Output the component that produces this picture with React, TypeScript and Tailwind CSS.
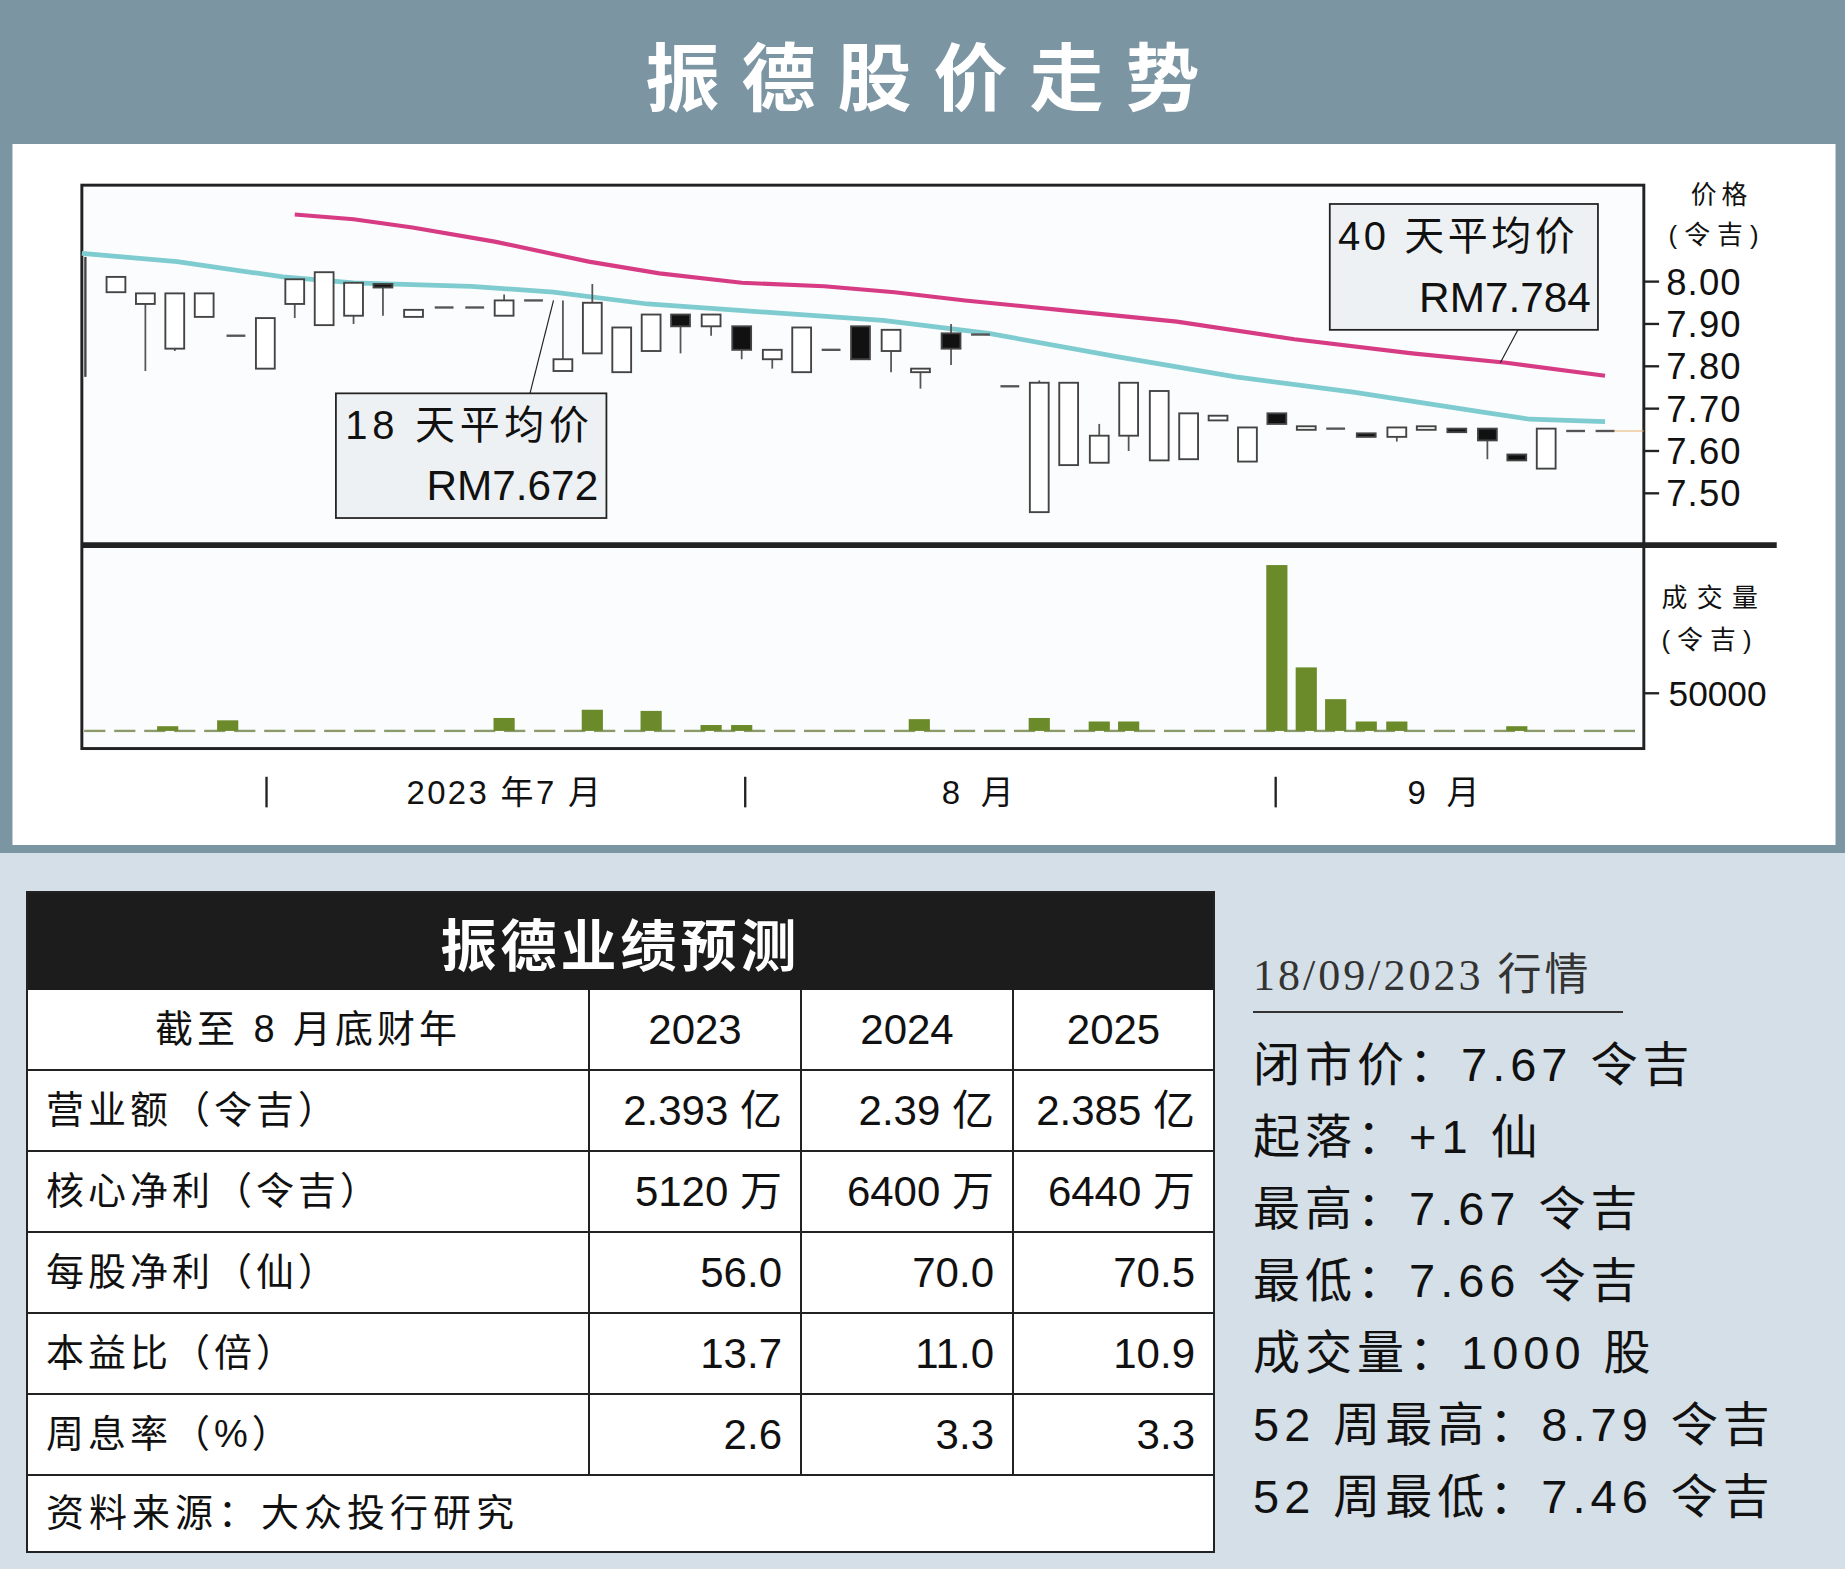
import React from "react";

type C = [number, number, number, number?, number?, number?];
const candles: C[] = [
  [98, 235, 248], [123, 249, 258, 249, 315], [148, 249, 296, 249, 298], [173, 249, 269],
  [200, 285, 286, 285, 302], [225, 270, 313], [250, 237, 258, 237, 270], [275, 231, 276],
  [300, 240, 268, 240, 275], [325, 241, 244, 241, 268, 1], [351, 263, 269], [377, 261, 262],
  [403, 261, 262], [428, 255, 268, 250, 268], [453, 255, 256], [478, 305, 315, 255, 315],
  [503, 257, 300, 241, 300], [528, 278, 316], [553, 267, 298], [578, 267, 277, 267, 300, 1],
  [604, 267, 277, 267, 285], [630, 277, 297, 277, 305, 1], [656, 297, 305, 297, 313],
  [681, 278, 316], [706, 297, 298], [731, 277, 305, 277, 305, 1], [757, 280, 298, 280, 316],
  [782, 313, 316, 313, 330], [808, 283, 296, 275, 310, 1], [833, 284, 285], [858, 328, 329],
  [883, 325, 435, 323, 435], [908, 325, 395], [934, 370, 393, 360, 393], [959, 325, 370, 325, 383],
  [985, 332, 391], [1010, 351, 390], [1035, 353, 357], [1060, 363, 392], [1085, 351, 360, 351, 360, 1],
  [1110, 362, 365], [1135, 364, 365], [1161, 368, 371, 368, 371, 1], [1187, 363, 371, 363, 375],
  [1212, 362, 365], [1238, 364, 367, 364, 367, 1], [1264, 364, 374, 364, 390, 1], [1289, 386, 391, 386, 391, 1],
  [1314, 364, 398], [1339, 366, 367], [1364, 366, 367],
];
const dashes = new Set([377, 403, 453, 706, 833, 858, 1135, 1339, 1364, 200, 1110, 1212]);
const vol: [number, number][] = [
  [142, 617], [193, 612], [428, 610], [503, 603], [553, 604], [604, 616], [630, 616], [781, 611],
  [883, 610], [934, 613], [959, 613], [1085, 480], [1110, 567], [1135, 594], [1161, 613], [1187, 613], [1289, 617],
];
const cyan = "69,215 150,222 240,235 300,240 400,243 470,248 550,258 650,265 750,272 840,283 950,303 1050,320 1150,333 1260,350 1300,356 1364,358";
const mag = "250,182 300,186 350,193 420,205 500,222 560,232 630,240 700,243 760,248 820,255 900,263 1000,273 1100,288 1200,300 1280,308 1364,319";

const num = "'Liberation Sans', 'Noto Sans CJK SC', sans-serif";

function Chart() {
  const ticks = [8.0, 7.9, 7.8, 7.7, 7.6, 7.5];
  return (
    <svg viewBox="10 122 1550 596" width={1824} height={701} fontFamily={num}>
      <rect x="10" y="122" width="1550" height="596" fill="#fff" />
      <rect x="69" y="157" width="1328" height="479" fill="#fbfcfd" stroke="#222" strokeWidth="2.5" />
      <line x1="69" y1="463" x2="1510" y2="463" stroke="#222" strokeWidth="5" />
      <line x1="1364" y1="366" x2="1397" y2="366" stroke="#e8b070" strokeWidth="1" />
      <polyline points={cyan} fill="none" stroke="#7ecbd0" strokeWidth="4" />
      <polyline points={mag} fill="none" stroke="#d63b84" strokeWidth="3.5" />
      <line x1="72" y1="218" x2="72" y2="320" stroke="#444" strokeWidth="2" />
      {candles.map(([x, t, b, wt, wb, f], i) => {
        if (dashes.has(x) && b - t <= 1)
          return <line key={i} x1={x - 8} y1={t} x2={x + 8} y2={t} stroke="#555" strokeWidth="2" />;
        return (
          <g key={i}>
            <line x1={x} y1={wt ?? t} x2={x} y2={wb ?? b} stroke="#555" strokeWidth="1.5" />
            <rect x={x - 8} y={t} width={16} height={Math.max(b - t, 3)} fill={f ? "#111" : "#fff"} stroke="#444" strokeWidth="1.6" />
          </g>
        );
      })}
      <line x1="450" y1="334" x2="470" y2="255" stroke="#222" strokeWidth="1" />
      <rect x="285" y="334" width="230" height="106" fill="#eef1f3" stroke="#222" strokeWidth="1.5" />
      <text x="293" y="373" fontSize="34" fill="#111" letterSpacing="4">18 天平均价</text>
      <text x="508" y="425" fontSize="36" fill="#111" textAnchor="end">RM7.672</text>
      <line x1="1290" y1="280" x2="1275" y2="308" stroke="#222" strokeWidth="1" />
      <rect x="1130" y="173" width="228" height="107" fill="#eef1f3" stroke="#222" strokeWidth="1.5" />
      <text x="1137" y="212" fontSize="34" fill="#111" letterSpacing="3">40 天平均价</text>
      <text x="1352" y="265" fontSize="36" fill="#111" textAnchor="end">RM7.784</text>
      {Array.from({ length: 52 }).map((_, i) => {
        const x = 80 + i * 25.5;
        return <line key={i} x1={x - 9} y1={621} x2={x + 9} y2={621} stroke="#8a9a6a" strokeWidth="2" />;
      })}
      {vol.map(([x, top], i) => (
        <rect key={i} x={x - 9} y={top} width={18} height={621 - top} fill="#6b8a2a" />
      ))}
      {ticks.map((t, i) => {
        const y = 239 + i * 36;
        return (
          <g key={t}>
            <line x1="1397" y1={y} x2="1410" y2={y} stroke="#222" strokeWidth="2" />
            <text x="1416" y={y + 11} fontSize="31" fill="#111" letterSpacing="1">{t.toFixed(2)}</text>
          </g>
        );
      })}
      <line x1="1397" y1="589" x2="1410" y2="589" stroke="#222" strokeWidth="2" />
      <text x="1418" y="600" fontSize="30" fill="#111">50000</text>
      <text x="1437" y="173" fontSize="22" fill="#111" letterSpacing="4">价格</text>
      <text x="1418" y="207" fontSize="22" fill="#111" letterSpacing="6">(令吉)</text>
      <text x="1412" y="516" fontSize="22" fill="#111" letterSpacing="8">成交量</text>
      <text x="1412" y="551" fontSize="22" fill="#111" letterSpacing="6">(令吉)</text>
      {[226, 633, 1084].map((x) => (
        <line key={x} x1={x} y1={660} x2={x} y2={686} stroke="#222" strokeWidth="2" />
      ))}
      <text x="345" y="683" fontSize="28" fill="#111" letterSpacing="2">2023 年7 月</text>
      <text x="800" y="683" fontSize="28" fill="#111" letterSpacing="5">8 月</text>
      <text x="1196" y="683" fontSize="28" fill="#111" letterSpacing="5">9 月</text>
    </svg>
  );
}

const rows: [string, string, string, string][] = [
  ["营业额（令吉）", "2.393 亿", "2.39 亿", "2.385 亿"],
  ["核心净利（令吉）", "5120 万", "6400 万", "6440 万"],
  ["每股净利（仙）", "56.0", "70.0", "70.5"],
  ["本益比（倍）", "13.7", "11.0", "10.9"],
  ["周息率（%）", "2.6", "3.3", "3.3"],
];

const info = [
  "闭市价：7.67 令吉",
  "起落：+1 仙",
  "最高：7.67 令吉",
  "最低：7.66 令吉",
  "成交量：1000 股",
  "52 周最高：8.79 令吉",
  "52 周最低：7.46 令吉",
];

export default function App() {
  return (
    <div className="w-[1845px] h-[1569px] bg-[#d4dfe7] flex flex-col" style={{ fontFamily: num }}>
      <div className="h-[144px] bg-[#7b95a3] flex items-center justify-center">
        <span className="text-white font-bold text-[74px] tracking-[22px] pl-[22px]" style={{ fontFamily: "'Noto Sans CJK SC', sans-serif" }}>振德股价走势</span>
      </div>
      <div className="h-[709px] bg-[#7b95a3] px-[12px] pb-[8px]">
        <Chart />
      </div>
      <div className="flex flex-1 pt-[38px] pl-[26px]">
        <div className="w-[1189px] h-[662px] bg-white border-2 border-[#222] flex flex-col text-[#111]">
          <div className="h-[97px] bg-[#1c1c1c] flex items-center justify-center text-white text-[56px] font-bold tracking-[4px]" style={{ fontFamily: "'Noto Sans CJK SC', sans-serif" }}>振德业绩预测</div>
          <div className="flex h-[81px] border-b-2 border-[#222] text-[42px]">
            <div className="w-[560px] flex items-center justify-center tracking-[4px] text-[38px]">截至 8 月底财年</div>
            <div className="w-[212px] border-l-2 border-[#222] flex items-center justify-center">2023</div>
            <div className="w-[212px] border-l-2 border-[#222] flex items-center justify-center">2024</div>
            <div className="flex-1 border-l-2 border-[#222] flex items-center justify-center">2025</div>
          </div>
          {rows.map((r) => (
            <div key={r[0]} className="flex h-[81px] border-b-2 border-[#222] text-[42px]">
              <div className="w-[560px] flex items-center pl-[18px] text-[38px] tracking-[4px]">{r[0]}</div>
              {r.slice(1).map((c, i) => (
                <div key={i} className={`${i === 2 ? "flex-1" : "w-[212px]"} border-l-2 border-[#222] flex items-center justify-end pr-[18px]`}>{c}</div>
              ))}
            </div>
          ))}
          <div className="flex-1 flex items-center pl-[18px] text-[38px] tracking-[5px]">资料来源：大众投行研究</div>
        </div>
        <div className="flex flex-col pl-[38px] pt-[52px] text-[#111]">
          <div className="w-[370px] border-b-2 border-[#333] text-[44px] tracking-[3px] pb-[2px] text-[#333]" style={{ fontFamily: "'Liberation Serif', 'Noto Sans CJK SC', serif" }}>18/09/2023 行情</div>
          <div className="flex flex-col mt-[16px]">
            {info.map((t) => (
              <div key={t} className="h-[72px] flex items-center text-[47px] tracking-[5px] whitespace-nowrap">{t}</div>
            ))}
          </div>
        </div>
      </div>
    </div>
  );
}
